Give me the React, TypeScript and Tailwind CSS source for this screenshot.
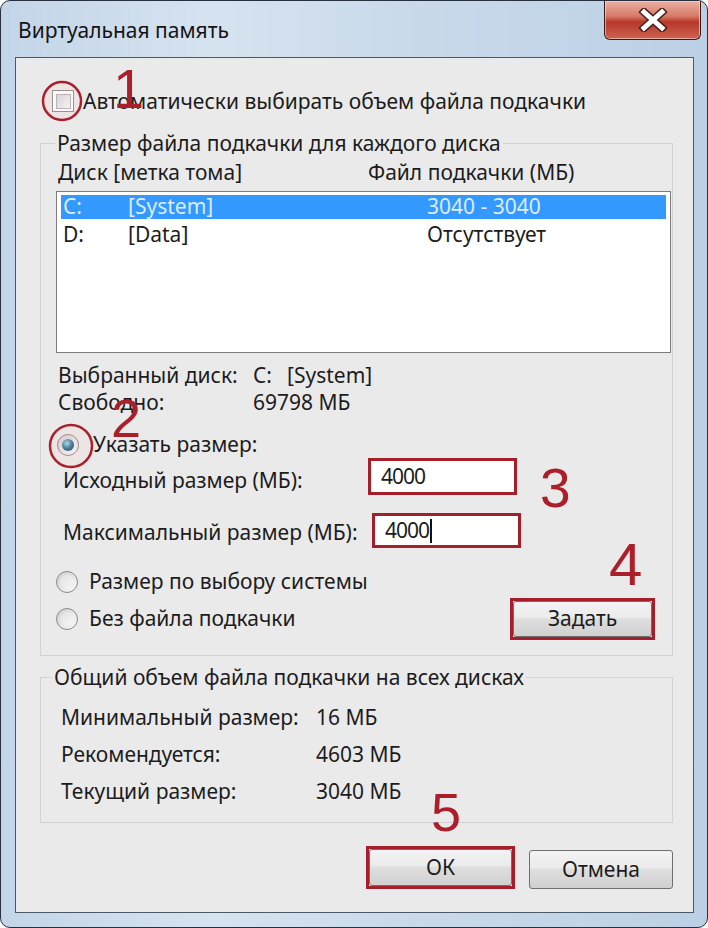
import type { ReactNode } from "react";

const font = "font-['Noto_Sans','Open_Sans',sans-serif]";
const red = "text-[#ab1f2b]";

function Checkbox() {
  return (
    <div className="flex size-[22px] shrink-0 items-center justify-center border border-[#8c8c8c] bg-white">
      <div className="size-[15px] border border-[#aeb3b9] bg-gradient-to-br from-[#d3d7dc] to-[#f7f8f9]" />
    </div>
  );
}

function Radio({ checked = false }: { checked?: boolean }) {
  return (
    <div className="flex size-[22px] shrink-0 items-center justify-center rounded-full border border-[#8a8a8a] bg-gradient-to-br from-[#cfcfcf] to-[#fbfbfb]">
      {checked ? (
        <div className="size-[12px] rounded-full bg-[radial-gradient(circle_at_40%_35%,#9fdcf0,#2a6a88_55%,#143c52)]" />
      ) : (
        <div className="size-[14px] rounded-full bg-gradient-to-br from-[#e2e2e2] to-[#f6f6f6]" />
      )}
    </div>
  );
}

function Win7Button({ children, className = "" }: { children: ReactNode; className?: string }) {
  return (
    <div
      className={`flex items-center justify-center rounded-[3px] border border-[#6f6f6f] bg-[linear-gradient(#f3f3f3_0%,#ebebeb_45%,#dedede_50%,#d0d0d0_100%)] text-[21px] text-[#1c1c1c] ${className}`}
    >
      {children}
    </div>
  );
}

function RedInput({ value, caret = false, className = "" }: { value: string; caret?: boolean; className?: string }) {
  return (
    <div className={`flex items-center border-[3px] border-[#a51f2a] bg-white pl-[10px] ${className}`}>
      <span className="text-[21px] leading-none tracking-[-1px]">{value}</span>
      {caret && <span className="ml-[1px] h-[24px] w-[2px] bg-[#111]" />}
    </div>
  );
}

function CloseButton() {
  return (
    <div className="mr-[6px] flex h-[39px] w-[97px] items-center justify-center rounded-b-[6px] border border-t-0 border-[#3b1a1a] bg-[linear-gradient(#eab0a4_0%,#d77a66_40%,#b8382a_55%,#cc6350_100%)] shadow-[inset_0_0_0_1px_rgba(255,220,210,0.6)]">
      <svg width="30" height="24" viewBox="0 0 30 24">
        <path d="M6 4 L24 20 M24 4 L6 20" stroke="#4a2020" strokeWidth="8" strokeLinecap="square" />
        <path d="M6 4 L24 20 M24 4 L6 20" stroke="#ffffff" strokeWidth="5" strokeLinecap="square" />
      </svg>
    </div>
  );
}

function Ring({ x, y, r }: { x: number; y: number; r: number }) {
  return (
    <svg
      className="pointer-events-none absolute"
      style={{ left: x - r - 3, top: y - r - 3 }}
      width={r * 2 + 6}
      height={r * 2 + 6}
    >
      <circle cx={r + 3} cy={r + 3} r={r} fill="rgba(255,190,190,0.12)" stroke="#a8202c" strokeWidth="2.5" />
    </svg>
  );
}

export default function App() {
  return (
    <div className={`relative h-[928px] w-[708px] bg-white ${font} text-[21px] text-[#1c1c1c]`}>
      <div className="flex h-[928px] w-[708px] flex-col rounded-[10px] border border-[#26313d] bg-[linear-gradient(90deg,#c3d5e8_0%,#d6e3f0_30%,#c9d9ea_60%,#bcd0e5_100%)]">
        {/* title bar */}
        <div className="flex h-[56px] items-start justify-between">
          <span className="pl-[17px] pt-[15px] leading-[28px] text-[#141414]">Виртуальная память</span>
          <CloseButton />
        </div>

        {/* client area */}
        <div className="ml-[14px] mr-[13px] flex flex-1 flex-col border border-[#4a5868] bg-[#ebeaea] pb-[23px]">
          <div className="ml-[36px] mt-[32px] flex h-[22px] items-center">
            <Checkbox />
            <span className="ml-[9px] leading-[28px]">Автоматически выбирать объем файла подкачки</span>
          </div>

          <fieldset className="ml-[24px] mt-[17px] w-[633px] border border-[#cfd3d6] pb-[15px]">
            <legend className="ml-[14px] px-[2px] leading-[28px]">Размер файла подкачки для каждого диска</legend>

            <div className="ml-[17px] mt-[2px] flex h-[28px] items-center">
              <span className="w-[310px]">Диск [метка тома]</span>
              <span>Файл подкачки (МБ)</span>
            </div>

            <div className="ml-[15px] mt-[4px] h-[162px] w-[615px] border border-[#7d7d7d] bg-white px-[4px] pt-[3px]">
              <div className="flex h-[24px] items-center bg-[#3399ff] text-[#dcecff]">
                <span className="w-[67px] pl-[2px]">C:</span>
                <span className="w-[299px]">[System]</span>
                <span>3040 - 3040</span>
              </div>
              <div className="mt-[4px] flex h-[24px] items-center">
                <span className="w-[67px] pl-[2px]">D:</span>
                <span className="w-[299px]">[Data]</span>
                <span>Отсутствует</span>
              </div>
            </div>

            <div className="ml-[17px] mt-[9px] flex h-[27px] items-center">
              <span className="w-[195px]">Выбранный диск:</span>
              <span className="w-[34px]">C:</span>
              <span>[System]</span>
            </div>
            <div className="ml-[17px] flex h-[27px] items-center">
              <span className="w-[195px]">Свободно:</span>
              <span>69798 МБ</span>
            </div>

            <div className="ml-[16px] mt-[16px] flex h-[26px] items-center">
              <Radio checked />
              <span className="ml-[14px]">Указать размер:</span>
            </div>

            <div className="flex h-[37px] items-start">
              <span className="ml-[22px] mt-[8px] w-[305px] leading-[28px]">Исходный размер (МБ):</span>
              <RedInput value="4000" className="h-[37px] w-[149px]" />
            </div>

            <div className="mt-[18px] flex h-[35px] items-start">
              <span className="ml-[22px] mt-[5px] w-[309px] leading-[28px]">Максимальный размер (МБ):</span>
              <RedInput value="4000" caret className="h-[35px] w-[149px]" />
            </div>

            <div className="ml-[15px] mt-[21px] flex h-[26px] items-center">
              <Radio />
              <span className="ml-[11px]">Размер по выбору системы</span>
            </div>

            <div className="mt-[3px] flex h-[42px] items-center">
              <div className="ml-[15px] flex w-[454px] items-center">
                <Radio />
                <span className="ml-[11px]">Без файла подкачки</span>
              </div>
              <div className="border-[3px] border-[#a51f2a]">
                <Win7Button className="h-[36px] w-[139px]">Задать</Win7Button>
              </div>
            </div>
          </fieldset>

          <fieldset className="ml-[24px] mt-[7px] w-[633px] border border-[#cfd3d6] pb-[12px]">
            <legend className="ml-[11px] px-[2px] leading-[28px]">Общий объем файла подкачки на всех дисках</legend>
            <div className="ml-[20px] mt-[8px] flex flex-col">
              {[
                ["Минимальный размер:", "16 МБ"],
                ["Рекомендуется:", "4603 МБ"],
                ["Текущий размер:", "3040 МБ"],
              ].map(([label, value]) => (
                <div key={label} className="flex h-[37px] items-center">
                  <span className="w-[255px]">{label}</span>
                  <span>{value}</span>
                </div>
              ))}
            </div>
          </fieldset>

          <div className="mr-[20px] mt-auto flex items-end justify-end gap-[14px]">
            <div className="border-[3px] border-[#a51f2a]">
              <Win7Button className="h-[37px] w-[143px]">ОК</Win7Button>
            </div>
            <Win7Button className="h-[39px] w-[144px]">Отмена</Win7Button>
          </div>
        </div>
        <div className="h-[14px]" />
      </div>

      {/* red annotations */}
      <Ring x={62} y={101} r={19} />
      <Ring x={71} y={446} r={21} />
      <span className={`absolute left-[113px] top-[61px] font-['Liberation_Sans',sans-serif] text-[56px] leading-none ${red}`}>1</span>
      <span className={`absolute left-[111px] top-[391px] font-['Liberation_Sans',sans-serif] text-[54px] leading-none ${red}`}>2</span>
      <span className={`absolute left-[540px] top-[461px] font-['Liberation_Sans',sans-serif] text-[55px] leading-none ${red}`}>3</span>
      <span className={`absolute left-[609px] top-[535px] font-['Liberation_Sans',sans-serif] text-[60px] leading-none ${red}`}>4</span>
      <span className={`absolute left-[431px] top-[785px] font-['Liberation_Sans',sans-serif] text-[54px] leading-none ${red}`}>5</span>
    </div>
  );
}
